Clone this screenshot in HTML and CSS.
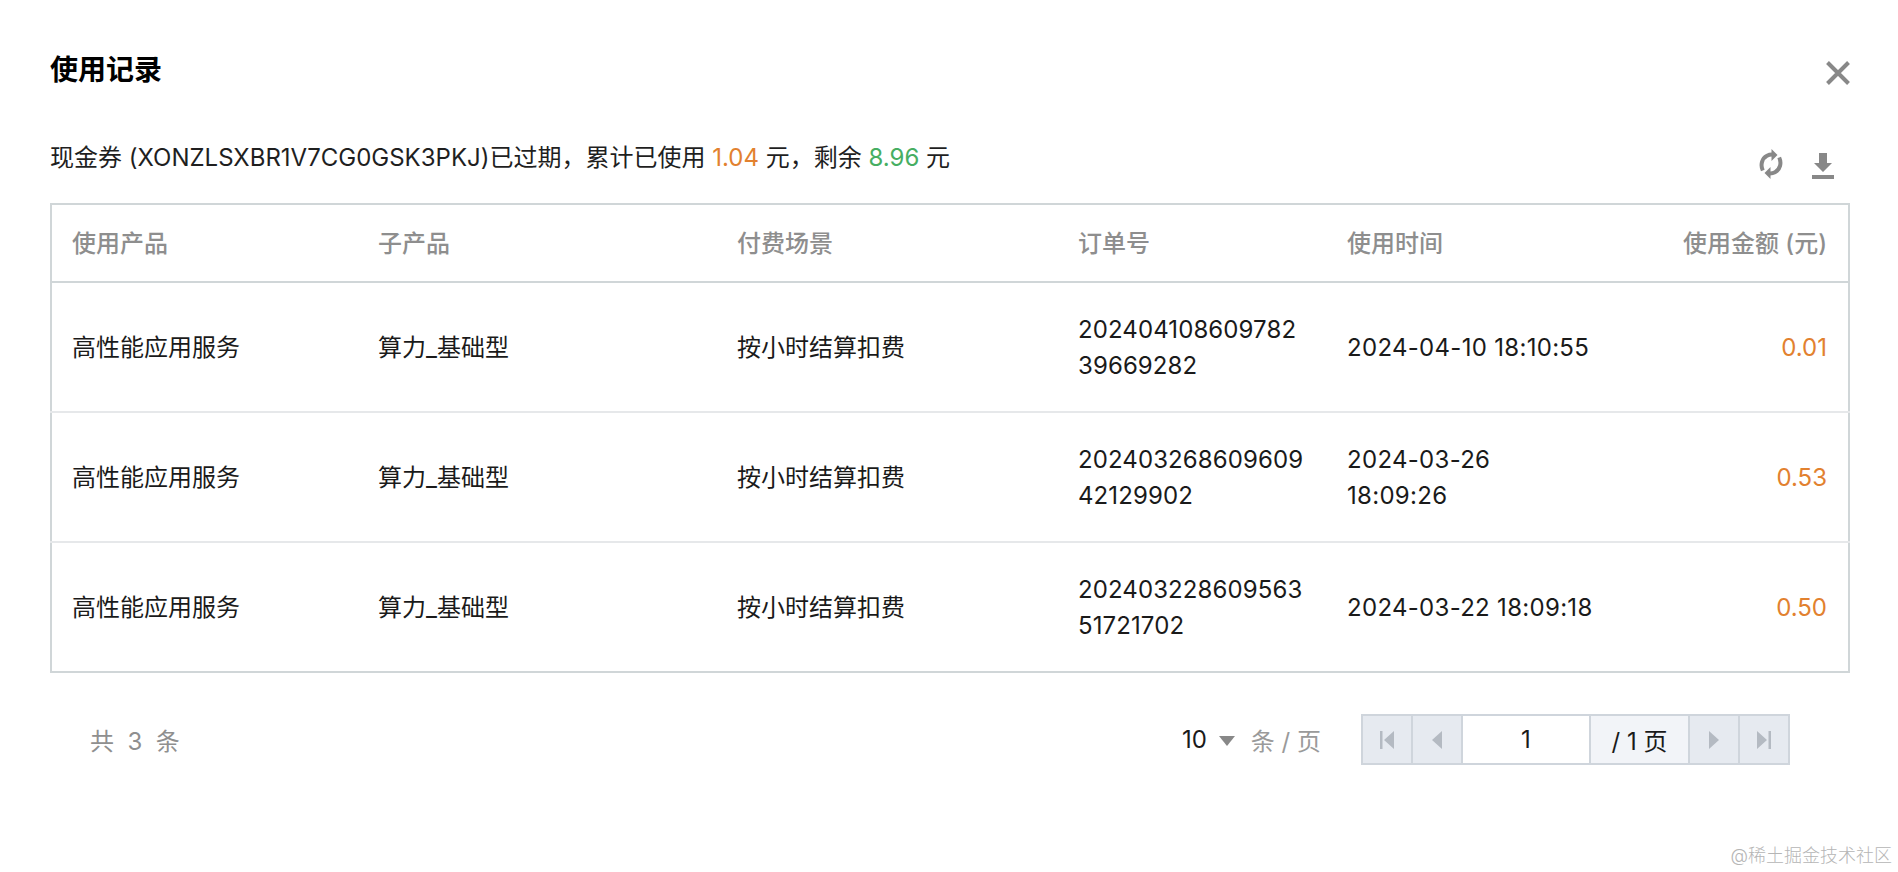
FILE: index.html
```html
<!DOCTYPE html>
<html lang="zh-CN">
<head>
<meta charset="utf-8">
<title>使用记录</title>
<link rel="stylesheet" href="styles.css">
</head>
<body>
<main class="dialog">
  <header class="dialog-head">
    <h1 class="title">使用记录</h1>
    <button class="icon-btn close" aria-label="关闭">
      <svg viewBox="0 0 24 24" width="24" height="24"><path d="M1.500 1.500 22.500 22.500M22.500 1.500 1.500 22.500" fill="none" stroke="#888" stroke-width="4"/></svg>
    </button>
  </header>
  <div class="toolbar">
    <p class="summary">现金券 (XONZLSXBR1V7CG0GSK3PKJ)已过期，累计已使用 <span class="orange">1.04</span> 元，剩余 <span class="green">8.96</span> 元</p>
    <div class="tools">
      <svg viewBox="0 0 24 30" width="24" height="30" aria-label="刷新"><g><path d="M3.800 21.500C1.200 16 2.800 9.500 8 6.800c1.500-.8 3.200-1.200 5-1.200" fill="none" stroke="#888" stroke-width="4"/><path fill="#888" d="M12.500 0 18.500 6 12.500 12z"/></g><g transform="rotate(180 12 15)"><path d="M3.800 21.500C1.200 16 2.800 9.500 8 6.800c1.500-.8 3.200-1.200 5-1.200" fill="none" stroke="#888" stroke-width="4"/><path fill="#888" d="M12.500 0 18.500 6 12.500 12z"/></g></svg>
      <svg viewBox="0 0 24 26" width="24" height="26" aria-label="下载"><path fill="#888" d="M8 0h8v10h5l-9 9-9-9h5zM1 22h22v4H1z"/></svg>
    </div>
  </div>
  <table class="records">
    <colgroup>
      <col class="c1"><col class="c2"><col class="c3"><col class="c4"><col class="c5"><col class="c6">
    </colgroup>
    <thead>
      <tr><th>使用产品</th><th>子产品</th><th>付费场景</th><th>订单号</th><th class="time-head">使用时间</th><th class="num">使用金额 (元)</th></tr>
    </thead>
    <tbody>
      <tr><td>高性能应用服务</td><td>算力_基础型</td><td>按小时结算扣费</td><td class="order">202404108609782<br>39669282</td><td class="time">2024-04-10 18:10:55</td><td class="num orange">0.01</td></tr>
      <tr><td>高性能应用服务</td><td>算力_基础型</td><td>按小时结算扣费</td><td class="order">202403268609609<br>42129902</td><td class="time">2024-03-26<br>18:09:26</td><td class="num orange">0.53</td></tr>
      <tr><td>高性能应用服务</td><td>算力_基础型</td><td>按小时结算扣费</td><td class="order">202403228609563<br>51721702</td><td class="time">2024-03-22 18:09:18</td><td class="num orange">0.50</td></tr>
    </tbody>
  </table>
  <footer class="pager-row">
    <span class="total">共&nbsp; 3&nbsp; 条</span>
    <div class="page-size">
      <span class="size">10</span><span class="caret"></span><span class="muted">条 / 页</span>
    </div>
    <nav class="pager">
      <span class="pg"><svg viewBox="0 0 14 18" width="14" height="18"><path fill="#b4bac2" d="M0 0h2.500v18H0zM14 0v18L4 9z"/></svg></span>
      <span class="pg"><svg viewBox="0 0 10 18" width="10" height="18"><path fill="#b4bac2" d="M10 0v18L0 9z"/></svg></span>
      <span class="pg-input">1</span>
      <span class="pg-total">/ 1 页</span>
      <span class="pg"><svg viewBox="0 0 10 18" width="10" height="18"><path fill="#b4bac2" d="M0 0v18L10 9z"/></svg></span>
      <span class="pg pg-last"><svg viewBox="0 0 14 18" width="14" height="18"><path fill="#b4bac2" d="M11.500 0H14v18h-2.500zM0 0v18L10 9z"/></svg></span>
    </nav>
  </footer>
</main>
<div class="watermark">@稀土掘金技术社区</div>
</body>
</html>
```

FILE: styles.css
```css
* { box-sizing: border-box; }
html, body { margin: 0; height: 100%; background: #fff; }
body {
  font-family: Inter, "Noto Sans CJK SC", "Liberation Sans", sans-serif;
  font-size: 24px;
  color: #1a1a1a;
  overflow: hidden;
}
.dialog { padding: 50px 48px 0 50px; }
.dialog-head { display: flex; justify-content: space-between; align-items: center; height: 40px; }
.title { margin: 0; font-size: 28px; font-weight: 700; color: #000; line-height: 40px; }
.icon-btn { border: 0; background: none; padding: 0; display: flex; }
.close { margin: 5px 0 0 0; }
.toolbar { display: flex; justify-content: space-between; align-items: flex-start; height: 113px; padding-top: 51px; }
.summary { margin: 0; font-size: 24px; line-height: 34px; color: #1f1f1f; }
.orange { color: #e2812f; }
.green { color: #46ae62; }
.tools { display: flex; align-items: flex-end; gap: 28px; height: 30px; margin: 8px 15px 0 0; }
.records { width: 100%; border-collapse: collapse; table-layout: fixed; border: 2px solid #d0d6d8; }
.c1 { width: 306px; }
.c2 { width: 359px; }
.c3 { width: 341px; }
.c4 { width: 270px; }
.c5 { width: 300px; }
th, td { padding: 2px 21px 0; text-align: left; font-weight: 400; line-height: 36px; font-size: 24px; }
th { height: 78px; color: #8e8e8e; font-weight: 500; border-bottom: 2px solid #d0d6d8; }
td { height: 130px; border-bottom: 2px solid #e6e8ea; }
tbody tr:last-child td { border-bottom: 0; }
th:first-child, td:first-child, .time-head { padding-left: 20px; }
.order { letter-spacing: 0.1px; }
.time { letter-spacing: 0.3px; padding-left: 20px; }
.num { text-align: right; }
td.orange { color: #e2812f; }
.pager-row { display: flex; align-items: center; height: 51px; margin-top: 41px; padding: 0 60px 0 40px; }
.total { color: #8f8f8f; font-size: 24px; flex: 1; }
.page-size { display: flex; align-items: center; margin-right: 40px; font-size: 24px; }
.caret { width: 0; height: 0; border-left: 8px solid transparent; border-right: 8px solid transparent; border-top: 10px solid #888; margin: 2px 16px 0 12px; }
.muted { color: #9a9a9a; }
.pager { display: flex; align-items: stretch; width: 429px; height: 51px; border: 2px solid #cfd5dc; background: #e6eaf0; }
.pg { flex: 0 0 50px; display: flex; align-items: center; justify-content: center; border-right: 2px solid #cfd5dc; }
.pg-last { flex-basis: 48px; border-right: 0; }
.pg-input { flex: 0 0 128px; display: flex; align-items: center; justify-content: center; background: #fff; border-right: 2px solid #cfd5dc; }
.pg-total { flex: 0 0 99px; display: flex; align-items: center; justify-content: center; background: #f2f4f8; border-right: 2px solid #cfd5dc; }
.watermark { position: absolute; right: 6px; bottom: 4px; font-size: 18px; line-height: 24px; color: #b5b5b5; font-weight: 300; }
```
